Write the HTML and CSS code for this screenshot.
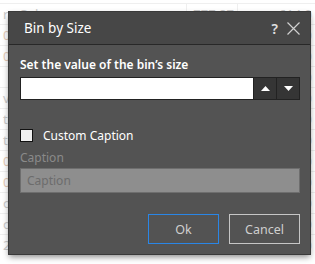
FILE: index.html
```html
<!DOCTYPE html>
<html lang="en">
<head>
    <meta charset="UTF-8">
    <meta name="viewport" content="width=device-width, initial-scale=1.0">
    <title>Bin by Size</title>
    <link rel="stylesheet" href="styles.css">
</head>
<body>
    <div class="sheet">
        <div class="row"><span class="c1">re Cul</span><span class="c2">777.87</span><span class="c3">614.0</span></div>
        <div class="row"><span class="c1 warm">00</span><span class="c2">512.10</span><span class="c3">0</span></div>
        <div class="row"><span class="c1 warm">00</span><span class="c2">488.02</span><span class="c3">0</span></div>
        <div class="row"><span class="c1"></span><span class="c2"></span><span class="c3">0</span></div>
        <div class="row"><span class="c1">ve</span><span class="c2">301.44</span><span class="c3">0</span></div>
        <div class="row"><span class="c1">t l</span><span class="c2">290.11</span><span class="c3">0</span></div>
        <div class="row"><span class="c1">t l</span><span class="c2">274.56</span><span class="c3">0</span></div>
        <div class="row"><span class="c1 warm">0 l</span><span class="c2">260.90</span><span class="c3">0</span></div>
        <div class="row"><span class="c1 warm">0 l</span><span class="c2">244.30</span><span class="c3">0</span></div>
        <div class="row"><span class="c1">ou</span><span class="c2">231.07</span><span class="c3">0</span></div>
        <div class="row"><span class="c1">ou</span><span class="c2">224.48</span><span class="c3">0</span></div>
        <div class="row"><span class="c1">23.48</span><span class="c2">221.08</span><span class="c3">0</span></div>
    </div>

    <div class="dialog">
        <div class="dialog-header">
            <span class="dialog-title">Bin by Size</span>
            <span class="help">?</span>
            <svg class="close" width="13" height="13" viewBox="0 0 13 13">
                <path d="M0.5 0.5 L12.5 12.5 M12.5 0.5 L0.5 12.5" stroke="#d0d0d0" stroke-width="1.2" fill="none"/>
            </svg>
        </div>
        <div class="dialog-body">
            <label class="field-label" for="binSize">Set the value of the bin’s size</label>
            <div class="spinner">
                <input type="text" id="binSize" class="spin-input">
                <button class="spin-btn" type="button">
                    <svg width="9" height="5" viewBox="0 0 9 5"><path d="M0 5 L4.5 0 L9 5 Z" fill="#fff"/></svg>
                </button>
                <button class="spin-btn" type="button">
                    <svg width="9" height="5" viewBox="0 0 9 5"><path d="M0 0 L9 0 L4.5 5 Z" fill="#fff"/></svg>
                </button>
            </div>

            <div class="check-row">
                <span class="checkbox"></span>
                <span class="check-label">Custom Caption</span>
            </div>
            <div class="caption-label">Caption</div>
            <input type="text" class="caption-input" placeholder="Caption" disabled>

            <div class="actions">
                <button class="btn btn-ok" type="button">Ok</button>
                <button class="btn" type="button">Cancel</button>
            </div>
        </div>
    </div>
</body>
</html>
```

FILE: styles.css
```css
body {
    margin: 0;
    width: 315px;
    height: 264px;
    overflow: hidden;
    background-color: #fff;
    font-family: "Noto Sans", "Open Sans", sans-serif;
    position: relative;
}
.sheet {
    padding-top: 3px;
}
.row {
    display: grid;
    grid-template-columns: 186px 51px 78px;
    height: 20px;
    border-top: 1px solid #efefef;
    font-size: 13px;
    line-height: 20px;
    color: #cacaca;
}
.row span {
    padding: 0 3px;
}
.c2 {
    text-align: right;
    border-left: 1px solid #efefef;
}
.c3 {
    text-align: right;
    border-left: 1px solid #efefef;
}
.warm {
    color: #e4cbb8;
}
.dialog {
    position: absolute;
    left: 9px;
    top: 12px;
    width: 301px;
    height: 242px;
    background-color: #535353;
    box-shadow: 0 3px 6px rgba(0,0,0,0.45);
    outline: 1px solid #3a3a3a;
    display: flex;
    flex-direction: column;
}
.dialog-header {
    height: 32px;
    background-color: #474747;
    border-bottom: 1px solid #282828;
    display: flex;
    align-items: center;
    padding: 0 10px 0 15px;
}
.dialog-title {
    flex: 1;
    color: #fff;
    font-size: 13.5px;
}
.help {
    color: #e0e0e0;
    font-size: 14px;
    font-weight: 600;
    margin-right: 9px;
}
.dialog-body {
    padding: 12px 10px 0 11px;
    display: flex;
    flex-direction: column;
}
.field-label {
    color: #fff;
    font-size: 12px;
    font-weight: 600;
    line-height: 16px;
}
.spinner {
    display: flex;
    margin-top: 4px;
    border: 1px solid #222;
    height: 21px;
}
.spin-input {
    flex: 1;
    border: none;
    margin: 0;
    padding: 0 4px;
    background: #fff;
    outline: none;
}
.spin-btn {
    width: 23px;
    border: none;
    border-left: 1px solid #222;
    background-color: #353535;
    padding: 0;
    display: flex;
    align-items: center;
    justify-content: center;
}
.check-row {
    display: flex;
    align-items: center;
    margin-top: 27px;
}
.checkbox {
    width: 11px;
    height: 11px;
    border: 1px solid #111;
    background-color: #efefef;
    margin-right: 10px;
}
.check-label {
    color: #fff;
    font-size: 12px;
}
.caption-label {
    color: #8a8a8a;
    font-size: 12px;
    margin-top: 5px;
}
.caption-input {
    margin-top: 2px;
    height: 25px;
    box-sizing: border-box;
    border: 1px solid #6e6e6e;
    background-color: #8e8e8e;
    font-family: inherit;
    font-size: 12px;
    padding: 0 6px;
}
.caption-input::placeholder {
    color: #6c6c6c;
}
.actions {
    display: flex;
    justify-content: flex-end;
    gap: 10px;
    margin-top: 21px;
}
.btn {
    width: 71px;
    height: 30px;
    background: transparent;
    border: 1px solid #c6c6c6;
    color: #cfcfcf;
    font-family: inherit;
    font-size: 12.5px;
    padding: 0;
}
.btn-ok {
    border-color: #2a86e6;
}
```
